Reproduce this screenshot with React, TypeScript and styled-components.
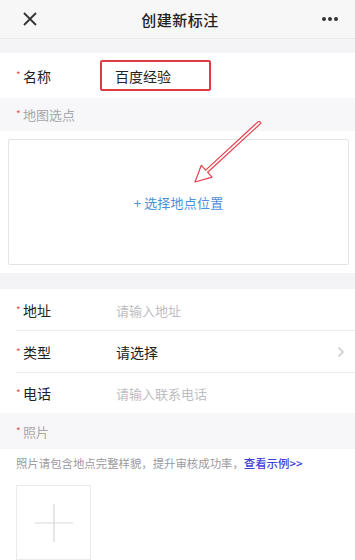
import React from 'react';
import styled, { createGlobalStyle } from 'styled-components';

const GlobalStyle = createGlobalStyle`
  html, body {
    margin: 0;
    padding: 0;
    background: #f4f4f6;
    font-family: "Noto Sans CJK SC", "Noto Sans", sans-serif;
  }
`;

const Page = styled.div`
  width: 355px;
  height: 560px;
  overflow: hidden;
  background: #f4f4f6;
  display: flex;
  flex-direction: column;
`;

const Header = styled.div`
  height: 38px;
  flex-shrink: 0;
  display: flex;
  align-items: center;
  justify-content: space-between;
  padding: 0 14px 0 19px;
  background: #f7f7f7;
  border-bottom: 1px solid #ececef;
`;

const Title = styled.div`
  font-size: 15px;
  font-weight: 500;
  color: #222;
  letter-spacing: 0.5px;
`;

const IconBox = styled.div`
  width: 22px;
  display: flex;
  align-items: center;
  justify-content: center;
`;

const Gap = styled.div<{ $h: number }>`
  height: ${({ $h }) => $h}px;
  flex-shrink: 0;
`;

const Row = styled.div<{ $h: number; $divider?: boolean }>`
  height: ${({ $h }) => $h}px;
  flex-shrink: 0;
  background: #fff;
  display: flex;
  align-items: center;
  padding-left: 16px;
  position: relative;
  &::after {
    content: '';
    display: ${({ $divider }) => ($divider ? 'block' : 'none')};
    position: absolute;
    left: 16px;
    right: 0;
    bottom: 0;
    height: 1px;
    background: #efeff2;
  }
`;

const Star = styled.span`
  color: #e0525c;
  font-size: 10px;
  width: 7px;
  align-self: center;
  margin-top: -2px;
`;

const Label = styled.span<{ $muted?: boolean }>`
  font-size: ${({ $muted }) => ($muted ? '13px' : '14px')};
  color: ${({ $muted }) => ($muted ? '#a8a8ad' : '#222')};
  width: 93px;
`;

const Value = styled.span<{ $placeholder?: boolean }>`
  font-size: ${({ $placeholder }) => ($placeholder ? '13px' : '14px')};
  color: ${({ $placeholder }) => ($placeholder ? '#bdbdc2' : '#222')};
  flex: 1;
`;

const NameBox = styled.div`
  box-sizing: border-box;
  width: 111px;
  height: 31px;
  border: 2px solid #e03a45;
  border-radius: 2px;
  display: flex;
  align-items: center;
  padding-left: 13px;
  margin-left: -16px;
  font-size: 14px;
  color: #222;
`;

const SectionHead = styled.div<{ $h: number }>`
  height: ${({ $h }) => $h}px;
  flex-shrink: 0;
  display: flex;
  align-items: center;
  padding-left: 16px;
  background: #f7f7f9;
`;

const MapWrap = styled.div`
  background: #fff;
  padding: 8px 6px 8px 8px;
  flex-shrink: 0;
  position: relative;
`;

const MapBox = styled.div`
  height: 126px;
  border: 1px solid #e4e4e8;
  border-radius: 2px;
  display: flex;
  align-items: center;
  justify-content: center;
  padding-top: 1px;
  box-sizing: border-box;
  font-size: 13px;
  color: #4a90dc;
  letter-spacing: 0.2px;
`;

const Arrow = styled.svg`
  position: absolute;
  left: 0;
  top: -10px;
  width: 355px;
  height: 170px;
  pointer-events: none;
`;

const Chevron = styled.span`
  margin-right: 10px;
  display: flex;
`;

const PhotoArea = styled.div`
  flex: 1;
  background: #fff;
  padding: 6px 16px 0;
`;

const Hint = styled.div`
  font-size: 11.4px;
  color: #9a9aa0;
  line-height: 16px;
  white-space: nowrap;
`;

const HintLink = styled.span`
  color: #3d3fd8;
  font-weight: 500;
`;

const Upload = styled.div`
  margin-top: 14px;
  width: 73px;
  height: 73px;
  border: 1px solid #ebebee;
  display: flex;
  align-items: center;
  justify-content: center;
`;

const App: React.FC = () => {
  return (
    <>
      <GlobalStyle />
      <Page>
        <Header>
          <IconBox>
            <svg width="16" height="16" viewBox="0 0 16 16">
              <path d="M2 2 L14 14 M14 2 L2 14" stroke="#333" strokeWidth="1.8" />
            </svg>
          </IconBox>
          <Title>创建新标注</Title>
          <IconBox>
            <svg width="18" height="6" viewBox="0 0 18 6">
              <circle cx="3" cy="3" r="2" fill="#333" />
              <circle cx="9" cy="3" r="2" fill="#333" />
              <circle cx="15" cy="3" r="2" fill="#333" />
            </svg>
          </IconBox>
        </Header>
        <Gap $h={14} />
        <Row $h={45}>
          <Star>*</Star>
          <Label>名称</Label>
          <NameBox>百度经验</NameBox>
        </Row>
        <SectionHead $h={33}>
          <Star>*</Star>
          <Label $muted>地图选点</Label>
        </SectionHead>
        <MapWrap>
          <MapBox>+ 选择地点位置</MapBox>
          <Arrow viewBox="0 121 355 170">
            <polygon
              points="261,123.1 207.7,172.3 212.1,177.1 195,182 201.3,165.3 205.7,170.1 259,120.9"
              fill="none"
              stroke="#e5404c"
              strokeWidth="1.2"
              strokeLinejoin="round"
            />
          </Arrow>
        </MapWrap>
        <Gap $h={16} />
        <Row $h={42} $divider>
          <Star>*</Star>
          <Label>地址</Label>
          <Value $placeholder>请输入地址</Value>
        </Row>
        <Row $h={42} $divider>
          <Star>*</Star>
          <Label>类型</Label>
          <Value>请选择</Value>
          <Chevron>
            <svg width="8" height="12" viewBox="0 0 8 12">
              <path d="M1.5 1.5 L6 6 L1.5 10.5" stroke="#c4c4c8" strokeWidth="1.4" fill="none" />
            </svg>
          </Chevron>
        </Row>
        <Row $h={40}>
          <Star>*</Star>
          <Label>电话</Label>
          <Value $placeholder>请输入联系电话</Value>
        </Row>
        <SectionHead $h={36}>
          <Star>*</Star>
          <Label $muted>照片</Label>
        </SectionHead>
        <PhotoArea>
          <Hint>
            照片请包含地点完整样貌，提升审核成功率，<HintLink>查看示例&gt;&gt;</HintLink>
          </Hint>
          <Upload>
            <svg width="38" height="38" viewBox="0 0 38 38">
              <path d="M19 0 V38 M0 19 H38" stroke="#d8d8dc" strokeWidth="1.2" />
            </svg>
          </Upload>
        </PhotoArea>
      </Page>
    </>
  );
};

export default App;
